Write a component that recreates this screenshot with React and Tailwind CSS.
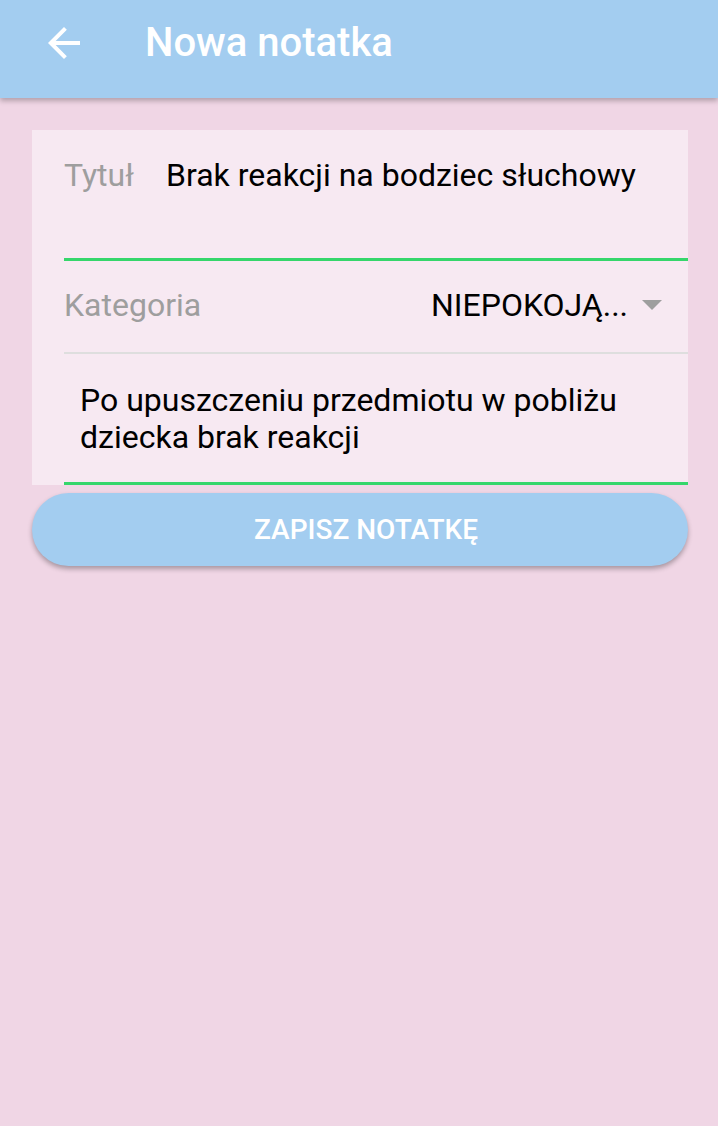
import React from 'react';

function BackArrow() {
  return (
    <svg width="48" height="48" viewBox="0 0 24 24" fill="white">
      <path d="M20 11H7.83l5.59-5.59L12 4l-8 8 8 8 1.41-1.41L7.83 13H20v-2z" />
    </svg>
  );
}

export default function App() {
  return (
    <div className="min-h-screen w-full bg-[#f0d6e5] font-['Roboto',sans-serif]">
      <header className="h-[98px] pb-[13px] bg-[#a3cdf0] flex items-center shadow-[0_3px_5px_rgba(0,0,0,0.25)] relative z-10">
        <div className="w-[145px] pl-[40px] flex items-center">
          <BackArrow />
        </div>
        <h1 className="text-white text-[40px] font-medium leading-none">Nowa notatka</h1>
      </header>

      <main className="pl-[32px] pr-[30px] pt-[32px]">
        <div className="bg-[#f7e9f2]">
          <div className="pl-[32px]">
            <div className="flex items-start pt-[27px] h-[131px] border-b-[3px] border-[#35d66b] text-[32px] leading-[37px]">
              <span className="text-[#9e9e9e] w-[102px]">Tytuł</span>
              <span className="text-black">Brak reakcji na bodziec słuchowy</span>
            </div>
            <div className="flex items-center h-[93px] pb-[2px] border-b-2 border-[#dedede] pr-[26px] text-[32px] leading-[37px]">
              <span className="text-[#9e9e9e] flex-1">Kategoria</span>
              <span className="text-black">NIEPOKOJĄ...</span>
              <svg width="20" height="11" viewBox="0 0 20 11" className="ml-[14px]">
                <path d="M0 0h20L10 10z" fill="#9e9e9e" />
              </svg>
            </div>
            <div className="pl-[16px] pt-[28px] h-[131px] border-b-[3px] border-[#35d66b] text-[32px] leading-[37px] text-black">
              Po upuszczeniu przedmiotu w pobliżu
              <br />
              dziecka brak reakcji
            </div>
          </div>
        </div>

        <button className="mt-[8px] w-full h-[73px] pl-[12px] rounded-full bg-[#a3cdf0] text-white text-[28px] font-medium shadow-[0_3px_5px_rgba(0,0,0,0.3)]">
          ZAPISZ NOTATKĘ
        </button>
      </main>
    </div>
  );
}
